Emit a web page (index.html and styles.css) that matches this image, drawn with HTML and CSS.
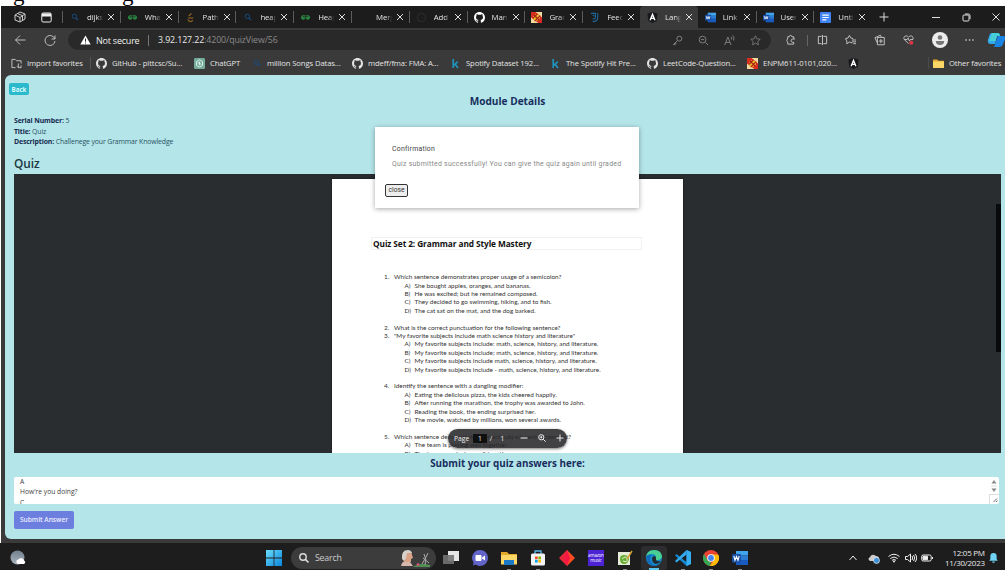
FILE: index.html
```html
<!DOCTYPE html>
<html lang="en">
<head>
<meta charset="utf-8">
<title>Module Details</title>
<link rel="stylesheet" href="styles.css">
</head>
<body>
<svg class="defs" width="0" height="0">
  <symbol id="search" viewBox="0 0 12 12"><circle cx="5" cy="5" r="3.2" fill="none" stroke="currentColor" stroke-width="1.4"/><path d="M7.4 7.4 10.5 10.5" stroke="currentColor" stroke-width="1.6"/></symbol>
  <symbol id="gfg" viewBox="0 0 12 12"><path d="M5.600 4.200H3.400a1.800 1.800 0 1 0 1.800 2.200H1.200M6.400 4.200h2.200a1.800 1.800 0 1 1-1.800 2.200h4" fill="none" stroke="#2a8a43" stroke-width="1.200"/></symbol>
  <symbol id="gh" viewBox="0 0 16 16"><path fill="currentColor" d="M8 0C3.58 0 0 3.58 0 8c0 3.54 2.29 6.53 5.47 7.59.4.07.55-.17.55-.38 0-.19-.01-.82-.01-1.49-2.01.37-2.53-.49-2.69-.94-.09-.23-.48-.94-.82-1.13-.28-.15-.68-.52-.01-.53.63-.01 1.08.58 1.23.82.72 1.21 1.87.87 2.33.66.07-.52.28-.87.51-1.07-1.78-.2-3.64-.89-3.64-3.95 0-.87.31-1.59.82-2.15-.08-.2-.36-1.02.08-2.12 0 0 .67-.21 2.2.82a7.6 7.6 0 0 1 4 0c1.53-1.04 2.2-.82 2.2-.82.44 1.1.16 1.92.08 2.12.51.56.82 1.27.82 2.15 0 3.07-1.87 3.75-3.65 3.95.29.25.54.73.54 1.48 0 1.07-.01 1.93-.01 2.2 0 .21.15.46.55.38A8 8 0 0 0 16 8c0-4.42-3.58-8-8-8z"/></symbol>
  <symbol id="flag" viewBox="0 0 12 12"><path fill="#f3d9a0" d="M0 0h12v12H0z"/><path fill="#d92b22" d="M0 0h5l7 6v6H8L0 6z"/><circle cx="6" cy="6" r="3.6" fill="#e8b921"/><path d="M2 7 7 2M4 10l6-6M3 3l6 6" stroke="#a91b15" stroke-width="1.2"/></symbol>
  <symbol id="ng" viewBox="0 0 12 12"><path fill="#17181b" d="m6 0 5.500 2-.9 7.500L6 12 1.400 9.500.5 2z"/><path d="M3.400 9 6 2.600 8.600 9M4.400 7h3.200" fill="none" stroke="#fff" stroke-width="1.500"/></symbol>
  <symbol id="word" viewBox="0 0 16 16"><path fill="#41a5ee" d="M4 1h12v4.500H4z"/><path fill="#2b7cd3" d="M4 5.500h12V10H4z"/><path fill="#185abd" d="M4 10h12v5H4z"/><rect y="4" width="9" height="8.500" rx="1" fill="#174ea6"/><path d="m1.800 6 1.200 4.300L4.500 6.500 6 10.300 7.200 6" fill="none" stroke="#fff" stroke-width="1.100"/></symbol>
  <symbol id="doc" viewBox="0 0 12 12"><rect width="12" height="12" rx="1" fill="#3f83f5"/><path d="M2.500 3.500h7M2.500 6h7M2.500 8.500h4.500" stroke="#fff" stroke-width="1.300"/></symbol>
  <symbol id="kag" viewBox="0 0 12 12"><path d="M3.500 1v10M8.500 4 4 8M5.500 6.500 8.700 11" stroke="#1d93bd" stroke-width="1.800" fill="none"/></symbol>
  <symbol id="folder" viewBox="0 0 16 16"><path fill="#e3a92a" d="M0 2h6l2 2h8v10H0z"/><path fill="#fbd768" d="M0 5h16v9.500H0z"/></symbol>
  <symbol id="star" viewBox="0 0 14 14"><path d="m7 1 1.800 3.900 4.200.5-3.100 2.900.8 4.200L7 10.400l-3.700 2.100.8-4.200L1 5.400l4.200-.5z" fill="none" stroke="currentColor"/></symbol>
  <symbol id="dark" viewBox="0 0 12 12"><circle cx="6" cy="6" r="4.500" fill="none" stroke="#292929" stroke-width="1.500"/></symbol>
  <linearGradient id="blue" x1="0" y1="0" x2="1" y2="1"><stop stop-color="#69dcfb"/><stop offset="1" stop-color="#0a86dc"/></linearGradient>
  <linearGradient id="moon" x1="0" y1="0" x2="0" y2="1"><stop stop-color="#71808e"/><stop offset="1" stop-color="#aab5bf"/></linearGradient>
</svg>

<div class="caption"><span class="cap-a">g</span><span class="cap-b">g</span></div>

<div class="desktop">
  <div class="tabs">
    <div class="tab-tools">
      <svg width="12" height="12" viewBox="0 0 12 12" fill="none" stroke="#ccc"><path d="m1 4 5-3 5 2v5L6 11 1 9zM1 4l5 2.500L11 3M6 6.500V11M3.500 2.500l5 2.200V9"/></svg>
      <svg width="11" height="11" viewBox="0 0 11 11"><rect x=".8" y="1" width="9.400" height="9" rx="1.300" fill="none" stroke="#eee"/><path d="M1 1.500h9v3H1z" fill="#eee"/></svg>
    </div>
    <div class="tab"><svg class="navy"><use href="#search"/></svg><span>dijks</span><i></i></div>
    <div class="tab"><svg><use href="#gfg"/></svg><span>What</span><i></i></div>
    <div class="tab"><svg viewBox="0 0 12 12"><path d="M7 1.500 4 4.500M3.500 6.500H9M3 8c1 3 4 3 5.500 1.200" stroke="#a36d25" stroke-width="1.100" fill="none"/></svg><span>Path</span><i></i></div>
    <div class="tab"><svg class="navy"><use href="#search"/></svg><span>heap</span><i></i></div>
    <div class="tab"><svg><use href="#gfg"/></svg><span>Heap</span><i></i></div>
    <div class="tab"><svg></svg><span>Merg</span><i></i></div>
    <div class="tab"><svg><use href="#dark"/></svg><span>Add</span><i></i></div>
    <div class="tab"><svg><use href="#gh"/></svg><span>Man</span><i></i></div>
    <div class="tab"><svg><use href="#flag"/></svg><span>Grad</span><i></i></div>
    <div class="tab"><svg viewBox="0 0 12 12"><path d="M2 1.500h5v4.200q0 2-3 2M9.500 1v5q0 4.500-5.500 4.500M4 3.500l2 1" stroke="#1f659b" stroke-width="1.200" fill="none"/></svg><span>Feed</span><i></i></div>
    <div class="tab active"><svg><use href="#ng"/></svg><span>Lang</span><i></i></div>
    <div class="tab"><svg><use href="#word"/></svg><span>Link</span><i></i></div>
    <div class="tab"><svg><use href="#word"/></svg><span>User</span><i></i></div>
    <div class="tab"><svg><use href="#doc"/></svg><span>Unti</span><i></i></div>
    <div class="window-tools">
      <svg width="10" height="10" viewBox="0 0 10 10" stroke="#ddd"><path d="M5 .5v9M.5 5h9"/></svg>
      <svg width="8" height="8" viewBox="0 0 8 8" stroke="#ddd"><path d="M0 4.500h8"/></svg>
      <svg width="9" height="9" viewBox="0 0 9 9" stroke="#ddd" fill="none"><rect x="1" y="2" width="6" height="6" rx="1"/><path d="M3 1h3.500Q8 1 8 2.500V6"/></svg>
      <svg width="8" height="8" viewBox="0 0 8 8" stroke="#ddd"><path d="m.5.500 7 7M7.500.5l-7 7"/></svg>
    </div>
  </div>

  <div class="toolbar">
    <svg class="nav" viewBox="0 0 12 12"><path d="M11.500 6H1.500M6 1.500 1.500 6 6 10.500"/></svg>
    <svg class="nav" viewBox="0 0 12 12"><path d="M10.800 5A5 5 0 1 0 11 7M11 1.500V5H7.500"/></svg>
    <div class="address">
      <svg class="warn" viewBox="0 0 12 11"><path d="M6 .5 11.700 10.500H.3z" fill="#fff"/><path d="M6 4v3.300M6 8.300v1.100" stroke="#222" stroke-width="1.100"/></svg>
      <span class="insecure">Not secure</span><b></b>
      <span class="url"><em>3.92.127.22</em>:4200/quizView/56</span>
      <div class="address-icons">
        <svg viewBox="0 0 12 12" fill="none" stroke="currentColor"><circle cx="8" cy="4" r="2.700"/><path d="M6 6 1.500 10.500h2v-1.500H5"/></svg>
        <svg viewBox="0 0 12 12" fill="none" stroke="currentColor"><circle cx="5" cy="5" r="3.700"/><path d="m8 8 3 3M3.200 5h3.600"/></svg>
        <svg viewBox="0 0 12 12" fill="none" stroke="currentColor"><path d="M.7 11 4.200 2.200 7.700 11M2 8h4.500M7.500 2q1.300 1 .8 3M9.500.5q2.200 2 1 5.500"/></svg>
        <svg><use href="#star"/></svg>
      </div>
    </div>
    <div class="actions">
      <svg viewBox="0 0 12 12"><path d="M9.500 4V2.500H7.500a1.500 1.500 0 0 0-3 0H3V4a4 4 0 0 0 0 5v1.500h6.500V8.500H8a1.800 1.800 0 0 1 0-3.500h2.500z"/></svg>
      <b></b>
      <svg viewBox="0 0 12 12"><path d="M5 2H1.500v8H5M7 2h3.500v8H7M6 .5v11"/></svg>
      <svg viewBox="0 0 12 12"><path d="M8 9.200 4.700 8.200 2 10.200V7L.5 4.600l2.800-.8L4.800 1l1.500 2.800L9 4.500M7.500 6H12M7.500 8H12M9 10h3"/></svg>
      <svg viewBox="0 0 12 12"><path d="M3.500 9 1 3.500l6-2.700 1 2M3.700 3.200h7.500v8H3.700zM7.500 5v4.500M5.200 7.200h4.500"/></svg>
      <svg viewBox="0 0 12 12"><path d="M6 10 1.500 5.500C-.5 2 4 0 6 3c2-3 6.500-1 4.500 2.500M1.500 5.500h3l1-1.500 1.500 3 1-1.500h3"/><circle cx="9" cy="9" r="2.300" fill="#dc3545" stroke="none"/></svg>
      <svg class="avatar" viewBox="0 0 16 16"><circle cx="8" cy="8" r="8" fill="#ececec" stroke="none"/><circle cx="8" cy="5.500" r="2.300" fill="#777" stroke="none"/><path d="M3.800 9h8.400q0 4-4.200 4T3.800 9z" fill="#777" stroke="none"/></svg>
      <svg viewBox="0 0 12 12"><path d="M1.500 6h1.500M5.300 6h1.500M9 6h1.500" stroke-width="1.500"/></svg>
      <svg class="copilot" viewBox="0 0 18 16"><g stroke="none"><path d="M5 1h6l-3 11H4Q0 12 1 8l1.500-5Q3 1 5 1z" fill="#31a9ed"/><path d="M8 12 11 4h5q3 0 2 3l-2 5q-1 3-3 3H6q2 0 2-3z" fill="#1784e6"/><path d="M5 1h6q2 0 2 3h-3L8.500 9H2z" fill="#45cfd7"/></g></svg>
    </div>
  </div>

  <div class="bookmarks">
    <svg viewBox="0 0 12 12" fill="none" stroke="#ccc"><path d="M5 10.500H1v-9h3.500L6 3h5v3M8 6v4.500h3V8M6.500 9 8 10.500"/></svg><span>Import favorites</span>
    <svg><use href="#gh"/></svg><span>GitHub - pittcsc/Su...</span>
    <svg viewBox="0 0 12 12"><rect width="12" height="12" rx="1.500" fill="#75ac9c"/><path d="m6 2 3.300 2v4L6 10 2.700 8V4zM6 4v4M4 5l4 2" fill="none" stroke="#e2f3ee"/></svg><span>ChatGPT</span>
    <svg class="navy"><use href="#search"/></svg><span>million Songs Datas...</span>
    <svg><use href="#gh"/></svg><span>mdeff/fma: FMA: A...</span>
    <svg><use href="#kag"/></svg><span>Spotify Dataset 192...</span>
    <svg><use href="#kag"/></svg><span>The Spotify Hit Pre...</span>
    <svg><use href="#gh"/></svg><span>LeetCode-Question...</span>
    <svg><use href="#flag"/></svg><span>ENPM611-0101,020...</span>
    <svg><use href="#ng"/></svg><span></span>
    <svg><use href="#folder"/></svg><span>Other favorites</span>
  </div>

  <main class="page">
    <button class="back">Back</button>
    <h1>Module Details</h1>
    <div class="info">
      <div><b>Serial Number:</b> 5</div>
      <div><b>Title:</b> Quiz</div>
      <div><b>Description:</b> Challenege your Grammar Knowledge</div>
    </div>
    <h2>Quiz</h2>
    <div class="viewer">
      <div class="paper">
        <h3>Quiz Set 2: Grammar and Style Mastery</h3>
        <ol>
          <li><span>1.</span>Which sentence demonstrates proper usage of a semicolon?</li>
          <li class="o"><span>A)</span>She bought apples, oranges, and bananas.</li>
          <li class="o"><span>B)</span>He was excited; but he remained composed.</li>
          <li class="o"><span>C)</span>They decided to go swimming, hiking, and to fish.</li>
          <li class="o gap"><span>D)</span>The cat sat on the mat, and the dog barked.</li>
          <li><span>2.</span>What is the correct punctuation for the following sentence?</li>
          <li><span>3.</span>"My favorite subjects include math science history and literature"</li>
          <li class="o"><span>A)</span>My favorite subjects include: math, science, history, and literature.</li>
          <li class="o"><span>B)</span>My favorite subjects include; math, science, history, and literature.</li>
          <li class="o"><span>C)</span>My favorite subjects include math, science, history, and literature.</li>
          <li class="o gap"><span>D)</span>My favorite subjects include - math, science, history, and literature.</li>
          <li><span>4.</span>Identify the sentence with a dangling modifier:</li>
          <li class="o"><span>A)</span>Eating the delicious pizza, the kids cheered happily.</li>
          <li class="o"><span>B)</span>After running the marathon, the trophy was awarded to John.</li>
          <li class="o"><span>C)</span>Reading the book, the ending surprised her.</li>
          <li class="o gap"><span>D)</span>The movie, watched by millions, won several awards.</li>
          <li><span>5.</span>Which sentence demonstrates correct subject-verb agreement?</li>
          <li class="o"><span>A)</span>The team is playing well together.</li>
          <li class="o"><span>B)</span>The team are playing well together.</li>
        </ol>
      </div>
      <div class="thumb"></div>
      <div class="pager">
        <span>Page</span><span class="num">1</span><span>/</span><span>1</span><b></b>
        <svg viewBox="0 0 8 8"><path d="M.5 4h7"/></svg>
        <svg viewBox="0 0 8 8"><circle cx="3.300" cy="3.300" r="2.600"/><path d="m5.300 5.300 2.400 2.400M2.200 3.300h2.200M3.300 2.200v2.200"/></svg>
        <svg viewBox="0 0 8 8"><path d="M.5 4h7M4 .5v7"/></svg>
      </div>
    </div>
    <h4>Submit your quiz answers here:</h4>
    <div class="answer">
      <div class="answer-text">A<br>How're you doing?<br>C</div>
      <svg width="10" height="27" viewBox="0 0 10 27"><path d="M2.500 6.500 5 3l2.500 3.500zM2.500 11.500 5 15l2.500-3.500z" fill="#888"/><path d="M2 9h6M0 17.500h10M.5 17v10" stroke="#ddd"/><path d="m4.500 25 3.500-3.500M7 25l1.500-1.500" stroke="#666"/></svg>
    </div>
    <button class="submit">Submit Answer</button>
    <div class="dialog">
      <div class="dialog-title">Confirmation</div>
      <p>Quiz submitted successfully! You can give the quiz again until graded</p>
      <button>close</button>
    </div>
  </main>

  <footer class="taskbar">
    <svg class="weather" viewBox="0 0 16 16"><circle cx="7.500" cy="7.500" r="7" fill="url(#moon)"/><path d="M8 14a2.300 2.300 0 0 1 .4-4.500 3.200 3.200 0 0 1 5.700 1A1.900 1.900 0 0 1 14 14z" fill="#fff"/></svg>
    <svg class="start" viewBox="0 0 16 16" fill="url(#blue)"><path d="M0 0h7.600v7.600H0zM8.400 0H16v7.600H8.400zM0 8.400h7.600V16H0zM8.400 8.400H16V16H8.400z"/></svg>
    <div class="search">
      <svg width="12" height="12" color="#ddd"><use href="#search"/></svg><span>Search</span>
      <svg width="30" height="17" viewBox="0 0 30 17"><path d="M0 16q1-5 5-5l4 1 3 4z" fill="#d8b8ae"/><path d="M2 6q0-5 5-5 4 0 4 4l1 3-2 1v3H4L2 9z" fill="#d9a486"/><path d="M1 9Q0 0 7 0q3 0 4 3L6 3 5 8l-2 3z" fill="#d5d0c9"/><path d="M12 17q6-5 17-2v2H13z" fill="#4f8f51"/><circle cx="17" cy="14.500" r="1.500" fill="#c65475"/><path d="m21 14 3-5 3-6M22 8l6 5M23 4q3 5 1 11" stroke="#aaa" fill="none"/></svg>
    </div>
    <div class="apps">
      <svg viewBox="0 0 16 16"><path fill="#e6e6e6" d="M5 1h11v10H5z"/><path fill="#737373" opacity=".9" d="M0 5h11v9H0z"/></svg>
      <svg viewBox="0 0 16 16"><path d="M8 0a8 8 0 1 1-4.500 14.600L1 15.500l.5-3A8 8 0 0 1 8 0z" fill="#6264c7"/><rect x="3.500" y="5" width="6" height="6" rx="1" fill="#fff"/><path d="m10 7.500 3-2v5l-3-2z" fill="#fff"/></svg>
      <div class="on"><svg viewBox="0 0 16 16"><use href="#folder"/><path d="M3 10h10v5H3z" fill="#1b79c9"/></svg></div>
      <div class="on"><svg viewBox="0 0 16 16"><path d="M5 4V1h6v3" fill="none" stroke="#55b6ea" stroke-width="1.300"/><rect x="1" y="3.500" width="14" height="12" rx="1.500" fill="#f1f3f5"/><path d="M5 6.500h2.700v2.700H5z" fill="#f25022"/><path d="M8.300 6.500H11v2.700H8.300z" fill="#7fba00"/><path d="M5 9.800h2.700v2.700H5z" fill="#00a4ef"/><path d="M8.300 9.800H11v2.700H8.300z" fill="#ffb900"/></svg></div>
      <svg viewBox="0 0 16 16"><path d="M8 0v16L0 8z" fill="#e9283a"/><path d="M8 0v16l8-8z" fill="#ff4b23"/><path d="m8 0 3 8-3 8-3-8z" fill="#f51845"/></svg>
      <div class="music">amazon<br>music</div>
      <div class="on"><svg viewBox="0 0 16 16"><path d="M1 2h12v13H1z" fill="#e7ecd8"/><path d="M3 9q0-4 4-4t5 4q-1 5-5 5t-4-5z" fill="#65ac32"/><path d="M5 9q4-4 5 0t-4 2" stroke="#e9f2cf" fill="none"/><path d="m10 9 5-8" stroke="#d9a13a" stroke-width="1.500"/></svg></div>
      <div class="running"><svg viewBox="0 0 16 16"><circle cx="8" cy="8" r="8" fill="#1489cf"/><path d="M0 7Q1 0 8 0q7 0 8 6 0 4-5 4-2 0-1-2Q10 4 6 4 1 4 0 7z" fill="#48cf91"/><path d="M0 7q2-3 6-2-3 2-2 5 1 5 7 6Q2 17 0 7z" fill="#126bb9"/><path d="M10 8q-1 4 5 3-2 3-5 3-4-1-4-5 0-2 2-3 2 0 2 2z" fill="#232b2c"/></svg></div>
      <div class="on"><svg viewBox="0 0 16 16"><path d="m11.500 0 4.500 2v12l-4.500 2L0 5.500 1.500 4 11.500 12z" fill="#1686ce"/><path d="M11.500 0v4.500L1.500 12.500 0 11z" fill="#30a9ee"/><path d="m11.500 0 4.500 2v12l-4.500 2z" fill="#36aef2"/></svg></div>
      <div class="on"><svg viewBox="0 0 16 16"><circle cx="8" cy="8" r="8" fill="#e94335"/><path d="M1.100 4 5 11l3 1-1 4A8 8 0 0 1 1.100 4z" fill="#34a853"/><path d="M8 4.500h7.200A8 8 0 0 1 7 16l4-6z" fill="#fbbc05"/><circle cx="8" cy="8" r="3.800" fill="#fff"/><circle cx="8" cy="8" r="2.900" fill="#4285f4"/></svg></div>
      <div class="on"><svg><use href="#word"/></svg></div>
    </div>
    <div class="tray">
      <svg viewBox="0 0 12 12"><path d="m2.500 8 3.500-4L9.500 8"/></svg>
      <svg viewBox="0 0 12 12"><path d="M2 9Q-1 7 2 5q2-4 6-1 3 0 3 3v2z" fill="#ccc" stroke="none"/><circle cx="8.500" cy="8.500" r="3" fill="#3d90d8" stroke="#eee" stroke-width=".7"/></svg>
      <svg viewBox="0 0 12 12"><path d="M.5 4.500q5.500-4.500 11 0M2.300 6.500q3.700-3 7.400 0M4 8.300q2-1.500 4 0"/><circle cx="6" cy="9.500" r="1" fill="#eee" stroke="none"/></svg>
      <svg viewBox="0 0 12 12"><path d="M.5 4.500h2l3-2.500v8l-3-2.500h-2zM7 4q1.500 2 0 4M8.500 3q2.500 3 0 6M10 2q3.500 4 0 8"/></svg>
      <svg viewBox="0 0 12 12"><rect x=".7" y="3" width="9.500" height="6" rx="1.500"/><path d="M2 4.300h4.500v3.400H2z" fill="#eee"/><path d="M11.500 5v2"/></svg>
    </div>
    <div class="clock">12:05 PM<br>11/30/2023</div>
    <svg class="bell" viewBox="0 0 10 12"><path d="M5 .5a3.500 3.500 0 0 1 3.500 3.500v3L9.700 9H.3l1.200-2V4A3.500 3.500 0 0 1 5 .5zM3.500 10h3q0 1.500-1.500 1.500T3.500 10z" fill="#6fd3f5"/></svg>
  </footer>
</div>
</body>
</html>
```
FILE: styles.css
```css
* { box-sizing: border-box; }
body { margin: 0; width: 1005px; height: 570px; overflow: hidden; background: #fff; font-family: "Open Sans", "Noto Sans", sans-serif; }
button { font-family: inherit; margin: 0; padding: 0; }
.defs { display: block; position: absolute; }
svg { flex: none; }

.caption { height: 6px; overflow: hidden; display: flex; padding-left: 13px; font: 23px/24px "Liberation Serif", serif; }
.caption span { width: 109px; margin-top: -18px; flex: none; }

.desktop { margin-left: 1px; width: 1004px; height: 564px; display: flex; flex-direction: column; background: #3a3a3a; color: #e4e4e4; font-size: 7.6px; }

/* Browser tab strip */
.tabs { height: 22px; flex: none; display: flex; background: #1c1c1c; }
.tab-tools { width: 61px; flex: none; display: flex; align-items: center; gap: 15px; padding-left: 13px; }
.tab { width: 57.8px; flex: none; height: 22px; display: flex; align-items: center; padding-left: 7px; background: linear-gradient(#5c5c5c, #5c5c5c) 0 5px / 1px 12px no-repeat; }
.tab svg { width: 11px; height: 11px; color: #fff; }
.tab span { width: 16px; margin-left: 7px; overflow: hidden; white-space: nowrap; font-size: 7.8px; letter-spacing: -.1px; -webkit-mask-image: linear-gradient(90deg, #000 65%, transparent); mask-image: linear-gradient(90deg, #000 65%, transparent); }
.tab i { width: 6px; height: 6px; margin-left: 5px; background: linear-gradient(45deg, transparent 43%, #ddd 43% 57%, transparent 57%), linear-gradient(-45deg, transparent 43%, #ddd 43% 57%, transparent 57%); }
.tab.active { background: #3a3a3a; border-radius: 4px 4px 0 0; }
.tab.active + .tab { background: none; }
.navy { color: #174f86; }
.tab svg.navy, .bookmarks svg.navy { color: #174f86; width: 8px; height: 8px; margin: 0 1px 0 2px; }
.window-tools { flex: 1; display: grid; grid-template-columns: 26px 54px 30px 1fr; align-items: center; justify-items: center; }
.window-tools svg:nth-child(2) { justify-self: end; margin-right: 11px; }
.window-tools svg:last-child { margin-left: 6px; }

/* Address row */
.toolbar { height: 24px; flex: none; display: flex; align-items: center; }
.nav { width: 12px; height: 12px; margin-left: 13px; fill: none; stroke: #bbb; }
.nav + .nav { margin-left: 18px; }
.address { width: 703px; height: 20px; margin-left: 12px; flex: none; display: flex; align-items: center; border-radius: 10px; background: #292929; padding-left: 12px; }
.warn { width: 11px; height: 10px; }
.insecure { width: 45px; margin-left: 5px; white-space: nowrap; font-size: 9px; letter-spacing: -.22px; color: #f0f0f0; }
.address > b { width: 1px; height: 11px; background: #777; margin: 0 9px 0 7px; }
.url { color: #8c8c8c; font-size: 8.8px; letter-spacing: -.1px; white-space: nowrap; }
.url em { color: #e8e8e8; font-style: normal; }
.address-icons { margin-left: auto; display: grid; grid-template-columns: repeat(4, 26px); justify-items: center; align-items: center; color: #858585; padding-right: 3px; }
.address-icons svg { width: 11px; height: 11px; }
.actions { flex: 1; display: grid; grid-template-columns: 38px 1px 24px 32px 26px 32px 31px 28px 1fr; align-items: center; justify-items: center; overflow: hidden; }
.actions svg { width: 11px; height: 12px; fill: none; stroke: #ccc; }
.actions > b { width: 1px; height: 11px; background: #666; margin-left: -5px; }
.actions svg.avatar { width: 16px; height: 16px; }
.actions svg.copilot { width: 18px; height: 16px; justify-self: start; margin-left: 4px; }

/* Favorites row */
.bookmarks { height: 22px; flex: none; display: grid; grid-template-columns: 11px 74px 11px 87px 11px 46px 11px 90px 11px 87px 11px 89px 11px 86px 11px 89px 11px 90px 11px 74px 11px 54px; align-items: center; padding-left: 10px; background: linear-gradient(#555, #555) 89px 5px / 1px 12px no-repeat, linear-gradient(#4b4b4b, #4b4b4b) 927px 5px / 1px 12px no-repeat; }
.bookmarks svg { width: 11px; height: 11px; }
.bookmarks span { padding-left: 5px; white-space: nowrap; font-size: 7.7px; letter-spacing: -.12px; }

/* Quiz page */
.page { position: relative; height: 464px; margin: 1px 0 0 4px; flex: none; display: flex; flex-direction: column; align-items: flex-start; background: #b4e6e9; border-radius: 6px 0 0 6px; padding: 8px 4px 0 9px; color: #2a5064; }
.back { width: 20px; height: 12px; margin-left: -5px; border: 0; border-radius: 2px; background: #2bbacb; color: #d9fbff; font-size: 6.2px; line-height: 11px; font-weight: 700; }
h1, h2, h3, h4 { margin: 0; }
h1 { width: 100%; margin-top: -1px; text-align: center; font-size: 10.1px; line-height: 14px; font-weight: 700; color: #182e5e; }
.info { margin-top: 8px; font-size: 6.9px; line-height: 10.5px; letter-spacing: -.13px; }
.info b { color: #15284f; }
h2 { margin-top: 7px; font-size: 11.8px; line-height: 17px; font-weight: 600; color: #203640; }
.viewer { position: relative; width: 987px; height: 279px; margin-top: 2px; overflow: hidden; background: #2a2d2f; display: flex; }
.paper { width: 351px; height: 300px; margin: 5px 0 0 318px; background: #fff; padding: 58px 41px 0 39px; color: #333; box-shadow: 0 0 2px #111; }
.paper h3 { height: 13px; width: 271px; border: 1px solid #f1f1f1; padding-left: 1px; font-size: 8.3px; letter-spacing: -.09px; line-height: 12px; font-weight: 700; color: #111; white-space: nowrap; }
.paper ol { list-style: none; margin: 23.6px 0 0; padding: 0; font: 6.38px/8.4px Lato, sans-serif; white-space: nowrap; }
.paper li { display: flex; padding-left: 13px; }
.paper li span { width: 10px; flex: none; }
.paper li.o { padding-left: 33.5px; }
.paper li.gap { margin-bottom: 8.4px; }
.thumb { position: absolute; right: 0; top: 30px; width: 5px; height: 148px; background: #080a0b; }
.pager { position: absolute; left: 434px; top: 255px; width: 119px; height: 19px; border-radius: 10px; background: rgba(40, 40, 42, .88); color: #eee; font-size: 6.8px; display: flex; align-items: center; padding-left: 6px; box-shadow: 0 1px 3px #777; }
.pager span { width: 14px; flex: none; text-align: center; }
.pager .num { background: #101010; margin: 0 0 0 4px; }
.pager span:nth-child(3) { width: 8px; }
.pager span:nth-child(4) { width: 15px; }
.pager > b { width: 1px; height: 19px; flex: none; background: #444; margin: 0 5px 0 4px; }
.pager span:first-child { width: 15px; }
.pager svg { width: 8px; height: 8px; fill: none; stroke: #eee; margin-right: 10px; }
h4 { width: 100%; text-align: center; font-size: 9.85px; line-height: 20px; color: #182e5e; }
.answer { width: 985px; height: 27px; margin-top: 4px; display: flex; justify-content: space-between; background: #fff; border-radius: 2px; overflow: hidden; }
.answer-text { font-size: 6.7px; line-height: 10.5px; color: #444; padding: 0 6px; }
.submit { width: 60px; height: 18px; margin-top: 7px; border: 0; border-radius: 2px; background: #6c7fde; color: #eef; font-size: 6.6px; font-weight: 600; }
.dialog { position: absolute; left: 370px; top: 52px; width: 264px; height: 81px; background: #fff; box-shadow: 0 1px 5px rgba(0, 0, 0, .35); padding: 17px 10px 0; font-family: Roboto, sans-serif; font-size: 6.9px; color: #888; }
.dialog-title { color: #444; letter-spacing: .25px; padding-left: 7px; line-height: 10px; }
.dialog p { margin: 5px 0 0 7px; letter-spacing: .27px; line-height: 10px; white-space: nowrap; }
.dialog button { display: block; width: 23px; height: 13px; margin-top: 15px; border: 1.5px solid #333; border-radius: 2px; background: #eee; font-size: 6.7px; line-height: 9px; color: #333; }

/* Taskbar */
.taskbar { height: 27px; margin: 4px 0 0 -1px; padding-left: 10px; flex: none; display: flex; align-items: center; background: #1d1d1d; padding-top: 3px; }
.weather { width: 16px; height: 16px; }
.start { width: 16px; height: 16px; margin-left: 240px; }
.search { width: 145px; height: 22px; margin-left: 9px; display: flex; align-items: center; border-radius: 11px; background: #3c3c3c; padding-left: 7px; }
.search span { width: 35px; margin: 0 51px 0 5px; font-size: 8.8px; letter-spacing: -.2px; color: #ccc; }
.apps { display: grid; grid-template-columns: repeat(11, 28.9px); justify-items: center; align-items: center; margin-left: 1px; flex: none; }
.apps svg { width: 16px; height: 16px; }
.running, .on { width: 26px; height: 24px; display: grid; place-items: center; background: linear-gradient(#8a8a8a, #8a8a8a) 50% 100% / 4px 1px no-repeat; }
.running { background: linear-gradient(#5cc5ee, #5cc5ee) 50% 100% / 10px 2px no-repeat #2d2d2f; border-radius: 3px; }
.music { width: 16px; height: 16px; background: #4b23d5; color: #fff; font-size: 4.5px; line-height: 5px; padding-top: 3px; text-align: center; letter-spacing: -.2px; }
.tray { margin-left: 88px; display: grid; grid-template-columns: 20px 23px 17px 16px 16px; justify-items: center; }
.tray svg { width: 12px; height: 12px; fill: none; stroke: #eee; }
.clock { width: 50px; text-align: right; font-size: 8px; line-height: 10px; letter-spacing: -.26px; color: #e8e8e8; }
.bell { width: 9px; height: 12px; margin-left: 4px; }
```
